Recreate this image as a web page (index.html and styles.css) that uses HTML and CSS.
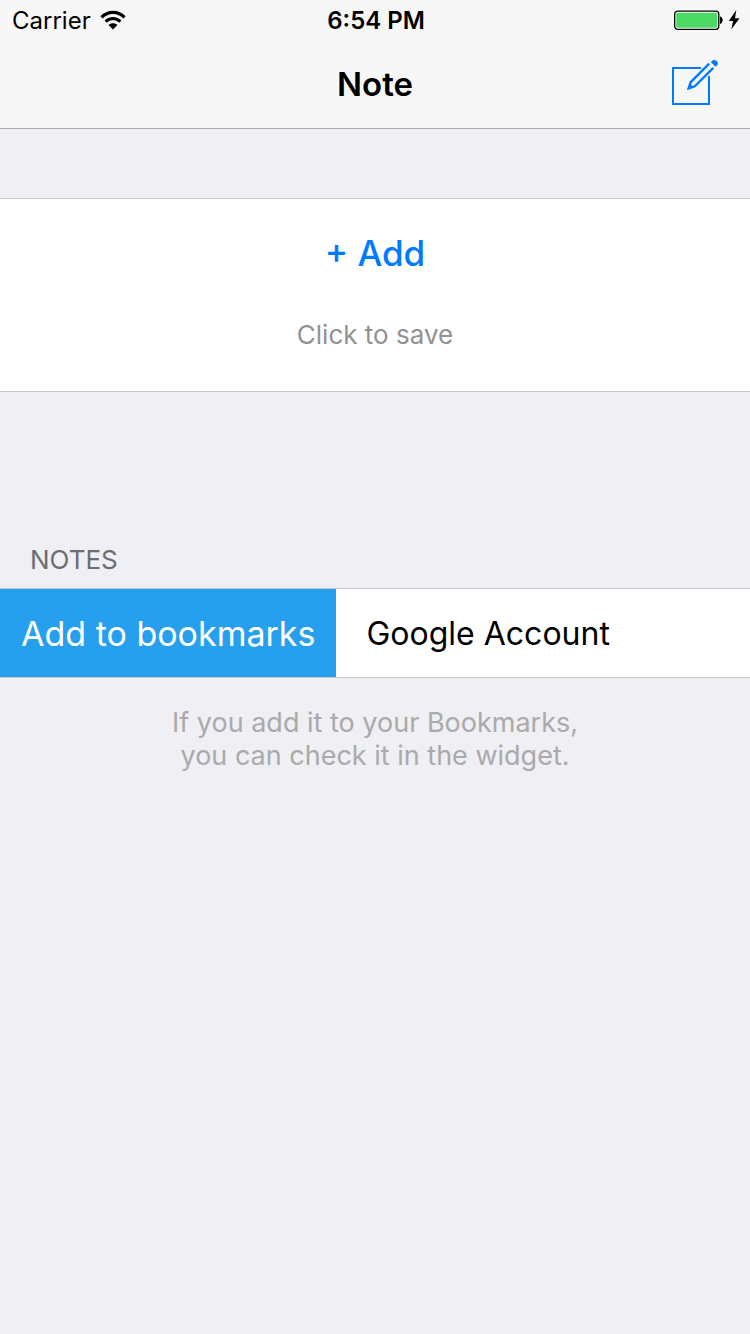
FILE: index.html
```html
<!DOCTYPE html>
<html lang="en">
<head>
<meta charset="utf-8">
<meta name="viewport" content="width=device-width, initial-scale=1">
<title>Note</title>
<link rel="stylesheet" href="styles.css">
</head>
<body>
<header class="header">
  <div class="status-bar">
    <div class="carrier">
      <span>Carrier</span>
      <svg class="wifi" width="26" height="20" viewBox="0 0 26 20" aria-hidden="true">
        <path d="M1.500 7.300C8 .6 18 .6 24.500 7.300" fill="none" stroke="#000" stroke-width="3.200"/>
        <path d="M5.600 11.600C9.800 7.500 16.200 7.500 20.400 11.600" fill="none" stroke="#000" stroke-width="3"/>
        <path d="M8.500 15C11.200 12.500 14.800 12.500 17.500 15L13 19.500Z"/>
      </svg>
    </div>
    <time class="clock">6:54 PM</time>
    <div class="power">
      <svg width="50" height="20" viewBox="0 0 50 20" aria-hidden="true">
        <rect x=".7" y="1.200" width="44.100" height="18.100" rx="3" fill="#fff" stroke="#000" stroke-width="1.300"/>
        <rect x="2.200" y="2.700" width="41.100" height="15.100" rx="1.500" fill="#4cd964"/>
        <path d="M46 6.600C49.500 6.800 49.500 13.700 46 13.900Z"/>
      </svg>
      <svg width="12" height="20" viewBox="0 0 12 20" aria-hidden="true">
        <path d="M8.300 0 .8 11H5L3.300 19.500 11.500 8.300H7Z"/>
      </svg>
    </div>
  </div>
  <div class="nav-bar">
    <h1 class="title">Note</h1>
    <button class="compose" type="button" aria-label="Compose note">
      <svg width="48" height="48" viewBox="0 0 48 48" aria-hidden="true">
        <path d="M31 10H3V46H39V18" fill="none" stroke="#007aff" stroke-width="2"/>
        <path d="M39.200 5.700 20.700 24.200 18.700 30.300 24.800 28.300 43.300 9.800" fill="none" stroke="#007aff" stroke-width="2.400"/>
        <path d="M17.500 31.500 19.500 25.200 23.800 29.500Z" fill="#007aff"/>
        <path d="M40.800 4.200 42 3C44.500-.2 50.200 4.800 47 7.200L45.500 8.800Z" fill="#007aff"/>
      </svg>
    </button>
  </div>
</header>
<main class="content">
  <section class="save-panel">
    <button class="add" type="button">+ Add</button>
    <p class="hint">Click to save</p>
  </section>
  <section class="notes">
    <h2 class="section-title">NOTES</h2>
    <div class="note-row">
      <button class="bookmark" type="button">Add to bookmarks</button>
      <span class="note-name">Google Account</span>
    </div>
    <p class="footer-text">If you add it to your Bookmarks,<br>you can check it in the widget.</p>
  </section>
</main>
</body>
</html>
```
FILE: styles.css
```css
* {
  box-sizing: border-box;
}

body {
  margin: 0;
  min-height: 100vh;
  background: #efeff4;
  color: #000;
  font-family: Inter, "Liberation Sans", sans-serif;
}

h1, h2, p {
  margin: 0;
  font-weight: 400;
}

button {
  padding: 0;
  border: 0;
  background: none;
  font: inherit;
  cursor: pointer;
}

svg {
  display: block;
}

.header {
  background: #f7f7f7;
  border-bottom: 1px solid #a7a7aa;
}

.status-bar {
  display: grid;
  grid-template-columns: 1fr auto 1fr;
  align-items: center;
  height: 40px;
  padding: 0 10px 0 12px;
  font-size: 24px;
}

.carrier {
  display: flex;
  align-items: center;
  gap: 9px;
}

.clock {
  font-weight: 600;
}

.power {
  display: flex;
  justify-content: flex-end;
  gap: 4px;
}

.nav-bar {
  display: grid;
  grid-template-columns: 1fr auto 1fr;
  align-items: center;
  height: 88px;
  padding: 0 32px;
}

.title {
  grid-column: 2;
  font-size: 33px;
  font-weight: 600;
}

.compose {
  justify-self: end;
  padding-bottom: 4px;
}

.content {
  padding-top: 69px;
}

.save-panel {
  display: flex;
  flex-direction: column;
  align-items: center;
  gap: 40px;
  padding: 32px 30px 36px;
  background: #fff;
  border: solid #c8c7cc;
  border-width: 1px 0;
}

.add {
  color: #007aff;
  font-size: 35px;
  font-weight: 500;
  line-height: 44px;
}

.hint {
  color: #929292;
  font-size: 26px;
  line-height: 40px;
}

.notes {
  padding-top: 148px;
}

.section-title {
  padding: 0 30px 8px;
  color: #6d6d72;
  font-size: 26px;
  line-height: 40px;
}

.note-row {
  display: flex;
  align-items: stretch;
  height: 90px;
  background: #fff;
  border: solid #c8c7cc;
  border-width: 1px 0;
}

.bookmark {
  flex: none;
  padding: 0 21px;
  background: #269fee;
  color: #fff;
  font-size: 34px;
  white-space: nowrap;
}

.note-name {
  align-self: center;
  padding: 0 30px;
  font-size: 32px;
}

.footer-text {
  padding: 28px 30px;
  color: #aaa;
  font-size: 27px;
  line-height: 33px;
  text-align: center;
}
```
